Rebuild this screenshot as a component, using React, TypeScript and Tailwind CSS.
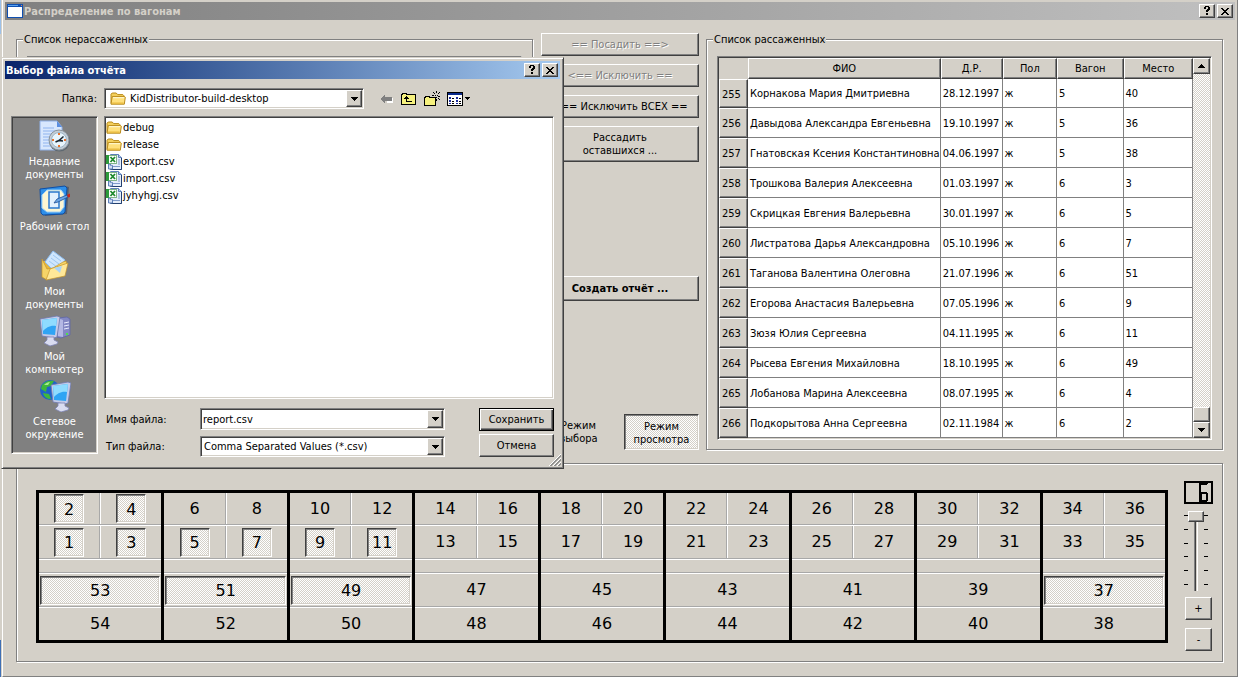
import React, { useState } from "react";
import clsx from "clsx";

const raised =
  "border border-t-white border-l-white border-r-[#404040] border-b-[#404040] bg-[#d4d0c8] shadow-[inset_-1px_-1px_0_#808080]";
const sunken =
  "border border-t-[#808080] border-l-[#808080] border-r-white border-b-white p-px shadow-[inset_1px_1px_0_#404040,inset_-1px_-1px_0_#d4d0c8]";
const pressed =
  "border border-t-[#404040] border-l-[#404040] border-r-white border-b-white shadow-[inset_1px_1px_0_#808080,inset_-1px_-1px_0_#d4d0c8] bg-[repeating-conic-gradient(#fff_0_25%,#d4d0c8_0_50%)] bg-[length:2px_2px]";
const etched =
  "border border-[#808080] shadow-[inset_1px_1px_0_#fff,1px_1px_0_#fff]";

const passengers = [
  { id: 255, name: "Корнакова Мария Дмитриевна", born: "28.12.1997", car: 5, seat: 40 },
  { id: 256, name: "Давыдова Александра Евгеньевна", born: "19.10.1997", car: 5, seat: 36 },
  { id: 257, name: "Гнатовская Ксения Константиновна", born: "04.06.1997", car: 5, seat: 38 },
  { id: 258, name: "Трошкова Валерия Алексеевна", born: "01.03.1997", car: 6, seat: 3 },
  { id: 259, name: "Скрицкая Евгения Валерьевна", born: "30.01.1997", car: 6, seat: 5 },
  { id: 260, name: "Листратова Дарья Александровна", born: "05.10.1996", car: 6, seat: 7 },
  { id: 261, name: "Таганова Валентина Олеговна", born: "21.07.1996", car: 6, seat: 51 },
  { id: 262, name: "Егорова Анастасия Валерьевна", born: "07.05.1996", car: 6, seat: 9 },
  { id: 263, name: "Зюзя Юлия Сергеевна", born: "04.11.1995", car: 6, seat: 11 },
  { id: 264, name: "Рысева Евгения Михайловна", born: "18.10.1995", car: 6, seat: 49 },
  { id: 265, name: "Лобанова Марина Алексеевна", born: "08.07.1995", car: 6, seat: 4 },
  { id: 266, name: "Подкорытова Анна Сергеевна", born: "02.11.1984", car: 6, seat: 2 },
];

const taken = [1, 2, 3, 4, 5, 7, 9, 11, 37, 49, 51, 53];
const compartments = [0, 1, 2, 3, 4, 5, 6, 7, 8];

const CaptionButtons: React.FC = () => (
  <div className="flex gap-[2px]">
    <button aria-label="Справка" className={clsx(raised, "flex h-[14px] w-4 items-center justify-center")}>
      <svg width="8" height="10" viewBox="0 0 8 10" shapeRendering="crispEdges">
        <path d="M1 1h1v-1h4v1h1v3h-1v1h-1v1h-2v-2h1v-1h1v-2h-2v2h-2zM3 7h2v2h-2z" />
      </svg>
    </button>
    <button aria-label="Закрыть" className={clsx(raised, "flex h-[14px] w-4 items-center justify-center")}>
      <svg width="8" height="7" viewBox="0 0 8 7" shapeRendering="crispEdges">
        <path d="M0 0h2v1h1v1h2v-1h1v-1h2v1h-1v1h-1v1h-1v1h1v1h1v1h1v1h-2v-1h-1v-1h-2v1h-1v1h-2v-1h1v-1h1v-1h1v-1h-1v-1h-1v-1h-1z" />
      </svg>
    </button>
  </div>
);

const DownArrow: React.FC<{ up?: boolean }> = ({ up }) => (
  <svg width="7" height="4" viewBox="0 0 7 4" shapeRendering="crispEdges" aria-hidden="true">
    <path d={up ? "M3 0h1v1h1v1h1v1h1v1h-7v-1h1v-1h1v-1h1z" : "M0 0h7v1h-1v1h-1v1h-1v1h-1v-1h-1v-1h-1v-1h-1z"} />
  </svg>
);

const ComboArrow: React.FC = () => (
  <span className={clsx(raised, "pointer-events-none flex w-4 shrink-0 items-center justify-center")}>
    <DownArrow />
  </span>
);

const FolderIcon: React.FC = () => (
  <svg width="16" height="16" viewBox="0 0 16 16" aria-hidden="true">
    <path d="M1 12.5V3.2L2.2 2h4l1.5 1.6h5.1l1 1V6" fill="#f3cf5b" stroke="#b98a1b" />
    <path d="M1 13.2 2.2 5.6h12.5l.6.7-1 6.9z" fill="#ffe07c" stroke="#b98a1b" />
    <path d="M3 6.7h11" stroke="#fffbdc" />
    <path d="M2.2 11.6h11.4l-.2 1.1H2z" fill="#e9b93c" />
  </svg>
);

const CsvIcon: React.FC = () => (
  <svg width="16" height="16" viewBox="0 0 16 16" aria-hidden="true">
    <path d="M4.5.5h8l3 3v12h-11z" fill="#e4edfb" stroke="#5c7fb8" />
    <path d="M12.5.5v3h3" fill="#b9cdee" stroke="#5c7fb8" />
    <path d="M12 6h2M12 8h2M12 10h2M7 12.5h7" stroke="#7f9bcb" />
    <path d="M15.5 4v11.5h-11" fill="none" stroke="#23406f" />
    <rect x="2.5" y="1.5" width="8" height="8" fill="#fff" stroke="#7fb487" />
    <path d="M4.500 3l4.500 5M9 3 4.500 8" stroke="#1f8a2f" strokeWidth="1.800" />
    <path d="M0 1h3v9H0z" fill="#2c9a3b" />
    <path d="M2.5 15h4v-3.500c-1.500 0-2.500-.5-4-1.500z" fill="#cfdcf2" stroke="#5c7fb8" />
  </svg>
);

const RecentIcon: React.FC = () => (
  <svg width="32" height="32" viewBox="0 0 32 32" aria-hidden="true">
    <path d="M1 1h17l5 6v23H1z" fill="#d8e7fd" stroke="#8fb0e6" />
    <path d="M18 1v6h5z" fill="#5a8ee0" />
    <path d="M4 8h11M4 11h14M4 14h10M4 17h7M4 20h6M4 23h6M4 26h8" stroke="#8fb3ee" />
    <circle cx="20.5" cy="21" r="10.5" fill="#5e6870" />
    <circle cx="20" cy="20" r="10" fill="#c3cdd6" stroke="#8a949c" />
    <circle cx="20" cy="20" r="7.5" fill="#e8f5fd" stroke="#9eb6c8" />
    <path d="M20 13v2M20 25v2M13 20h2M25 20h2" stroke="#e8702a" strokeWidth="2" />
    <path d="M16.5 22 20 20.5l4.5-4M20 20.500l4 .5" fill="none" stroke="#16232e" strokeWidth="1.500" />
  </svg>
);

const DesktopIcon: React.FC = () => (
  <svg width="32" height="32" viewBox="0 0 32 32" aria-hidden="true">
    <path d="M3 5 26 1l4 1-2 27-22 2z" fill="#3f4a5c" opacity=".6" />
    <path d="M1 4 26 1l2 2-2 24-2 2-20 1-2-2z" fill="#2f8fe8" stroke="#0e4fa6" />
    <path d="M8 5h14l3 4v13l-4 5H8l-5-4V10z" fill="#fdf6d2" stroke="#9fd0f6" />
    <path d="M10 7h10v16H10z" fill="#e3f1fe" stroke="#2a78cf" strokeWidth="1.500" />
    <path d="M15 18l3-4 10-4 1 2-10 5z" fill="#6ba6e6" stroke="#1f4f94" strokeWidth=".8" />
    <path d="M28 10l3-1.500v3.500l-2 .5z" fill="#c8261a" />
  </svg>
);

const DocumentsIcon: React.FC = () => (
  <svg width="32" height="32" viewBox="0 0 32 32" aria-hidden="true">
    <path d="M3 11h6l3 4v14l-8-2z" fill="#e6b63d" />
    <path d="M14 1 26 10 17 23 6 12z" fill="#cfe6fd" stroke="#8cbdf0" />
    <path d="M14 5l8 6M12 8l8 6M10 11l8 6" stroke="#9cc6f2" />
    <path d="M3 9v18l5 3 4-10 16-6-1-3-3 1-10 6-6 1z" fill="#f6d468" stroke="#c6952a" strokeWidth=".7" />
    <path d="M7 30 11 19l6-2 12-4-3 13z" fill="#ffe898" stroke="#c6952a" strokeWidth=".7" />
    <path d="M15 18l8-2-2 7z" fill="#a9d3f8" />
  </svg>
);

const Monitor: React.FC = () => (
  <g>
    <path d="M1 4 18 1l3 1-3 20-3 1L3 21z" fill="#c4cbe8" stroke="#6d78ad" strokeWidth=".8" />
    <path d="M3 5 18 3l-2 17L4 19z" fill="#2fa4f4" />
    <path d="M3 5 18 3l-1 8C11 10 7 13 4 16z" fill="#8fdcff" />
    <path d="M8 22h7v3l4 2-1 2-7 2-6-3 3-3z" fill="#d9dcf0" stroke="#7d84b4" strokeWidth=".8" />
  </g>
);

const ComputerIcon: React.FC = () => (
  <svg width="32" height="32" viewBox="0 0 32 32" aria-hidden="true">
    <path d="M19 3l9-1 3 2v16l-9 3-4-1z" fill="#8388c4" stroke="#6067a4" strokeWidth=".8" />
    <path d="M19 3l5 2v17l-5-1z" fill="#b4b8e4" />
    <path d="M25 8l5-1M25 11l5-1M25 14l5-1" stroke="#e9ebff" />
    <path d="M27 19h2" stroke="#4de04b" strokeWidth="2" />
    <Monitor />
  </svg>
);

const NetworkIcon: React.FC = () => (
  <svg width="32" height="32" viewBox="0 0 32 32" aria-hidden="true">
    <circle cx="11" cy="10" r="10" fill="#1f62c8" />
    <path d="M3 5c3-4 8-5 12-4l-3 5-4 1-1 5-5-3zM4 13l6 1 2 5c-4 0-7-2-8-6z" fill="#3fb73c" />
    <path d="M5 5c2-2 4-3 6-3l-2 3z" fill="#a8ec8f" />
    <g transform="translate(11 1)">
      <Monitor />
    </g>
  </svg>
);

const places = [
  { label: "Недавние документы", icon: <RecentIcon /> },
  { label: "Рабочий стол", icon: <DesktopIcon /> },
  { label: "Мои документы", icon: <DocumentsIcon /> },
  { label: "Мой компьютер", icon: <ComputerIcon /> },
  { label: "Сетевое окружение", icon: <NetworkIcon /> },
];

const files = [
  { name: "debug", folder: true },
  { name: "release", folder: true },
  { name: "export.csv", folder: false },
  { name: "import.csv", folder: false },
  { name: "jyhyhgj.csv", folder: false },
];

const ToolbarIcons: React.FC = () => (
  <div className="ml-4 flex items-center">
    <button aria-label="Назад" className="flex w-[21px] justify-start" disabled>
      <svg width="14" height="12" viewBox="0 0 14 12" shapeRendering="crispEdges">
        <path d="M6 2v3h7v5H7v2z" fill="#fff" />
        <path d="M0 6l5-5v3h7v4H5v3z" fill="#808080" />
      </svg>
    </button>
    <button aria-label="Вверх" className="flex w-[23px] justify-start">
      <svg width="16" height="14" viewBox="0 0 16 14" shapeRendering="crispEdges">
        <path d="M.5 2.5h1v-1h4v1h9v10h-14z" fill="#f6f17e" stroke="#000" />
        <path d="M5 4h1v1h1v1h1v1h-2v2h5v1H5V7H3V6h1V5h1z" />
      </svg>
    </button>
    <button aria-label="Новая папка" className="flex w-[23px] justify-start">
      <svg width="17" height="16" viewBox="0 0 17 16" shapeRendering="crispEdges">
        <path d="M.5 6.5h1v-1h4v1h6v8H.5z" fill="#f6f17e" stroke="#000" />
        <path d="M12 0h1v2h-1zM12 8h1v2h-1zM8 4h2v1H8zM14 5h2v1h-2zM9 1h1v1H9zM10 2h1v1h-1zM15 1h1v1h-1zM14 2h1v1h-1zM11 4h1v1h-1zM13 4h1v1h-1zM14 7h1v1h-1zM15 8h1v1h-1zM12 6h1v1h-1z" />
      </svg>
    </button>
    <button aria-label="Вид" className="flex items-center gap-[2px]">
      <svg width="16" height="14" viewBox="0 0 16 14" shapeRendering="crispEdges">
        <path d="M.5.5h15v13H.5z" fill="#fff" stroke="#000" />
        <path d="M1 1h14v2H1z" fill="#0a2a8c" />
        <path d="M2 5h2v2H2zM9 5h2v2H9zM2 8h2v2H2zM9 8h2v2H9zM2 11h2v1H2zM9 11h2v1H9z" fill="#1c2c9c" />
        <path d="M5 6h2v1H5zM12 6h2v1h-2zM5 9h2v1H5zM12 9h2v1h-2zM5 11h2v1H5zM12 11h2v1h-2z" />
      </svg>
      <svg width="5" height="3" viewBox="0 0 5 3" shapeRendering="crispEdges">
        <path d="M0 0h5v1H4v1H3v1H2V2H1V1H0z" />
      </svg>
    </button>
  </div>
);

const SaveDialog: React.FC = () => {
  const [fileName, setFileName] = useState<string>("report.csv");

  return (
    <div
      role="dialog"
      aria-label="Выбор файла отчёта"
      className="absolute top-[57px] left-px w-[563px] border border-t-[#d4d0c8] border-r-[#404040] border-b-[#404040] border-l-[#d4d0c8] bg-[#d4d0c8] p-[3px] shadow-[inset_1px_1px_0_#fff,inset_-1px_-1px_0_#808080]"
    >
      <div className="flex h-[18px] items-center justify-between bg-linear-to-r from-[#0a246a] to-[#a6caf0] pr-[2px] pl-px">
        <h2 className="font-bold text-white">Выбор файла отчёта</h2>
        <CaptionButtons />
      </div>

      <div className="mt-[9px] flex items-center">
        <label htmlFor="folder" className="w-[92px] text-right">
          Папка:
        </label>
        <div className={clsx(sunken, "ml-[7px] flex h-[21px] w-[260px] bg-white")}>
          <span className="ml-1 flex items-center">
            <FolderIcon />
          </span>
          <select id="folder" className="min-w-0 flex-1 appearance-none bg-white pl-1">
            <option>KidDistributor-build-desktop</option>
          </select>
          <ComboArrow />
        </div>
        <ToolbarIcons />
      </div>

      <div className="mt-[7px] flex pr-[6px] pb-2 pl-[6px]">
        <nav className={clsx(sunken, "h-[338px] w-[87px] shrink-0 self-start bg-[#808080] pt-[3px]")}>
          {places.map((place) => (
            <button
              key={place.label}
              className="flex h-[65px] w-full flex-col items-center gap-[3px] text-center text-white"
            >
              {place.icon}
              <span className="max-w-[76px]">{place.label}</span>
            </button>
          ))}
        </nav>

        <div className="ml-[6px] flex-1">
          <ul className={clsx(sunken, "h-[283px] bg-white pt-[2px]")}>
            {files.map((file) => (
              <li key={file.name} className="flex h-[17px] items-center gap-px">
                {file.folder ? <FolderIcon /> : <CsvIcon />}
                <span>{file.name}</span>
              </li>
            ))}
          </ul>
          <div className="mt-[9px] flex justify-between">
            <div className="flex flex-col gap-[6px] pl-[2px]">
              <div className="flex items-center">
                <label htmlFor="file-name" className="w-[94px]">
                  Имя файла:
                </label>
                <div className={clsx(sunken, "flex h-[22px] w-[245px] bg-white")}>
                  <input
                    id="file-name"
                    value={fileName}
                    onChange={(e) => setFileName(e.target.value)}
                    className="min-w-0 flex-1 pl-px outline-none"
                  />
                  <ComboArrow />
                </div>
              </div>
              <div className="flex items-center">
                <label htmlFor="file-type" className="w-[94px]">
                  Тип файла:
                </label>
                <div className={clsx(sunken, "flex h-[21px] w-[245px] bg-white")}>
                  <select id="file-type" className="min-w-0 flex-1 appearance-none bg-white pl-[2px]">
                    <option>Comma Separated Values (*.csv)</option>
                  </select>
                  <ComboArrow />
                </div>
              </div>
            </div>
            <div className="flex w-[75px] flex-col gap-[3px]">
              <button className="h-[23px] border border-black bg-[#d4d0c8] shadow-[inset_1px_1px_0_#fff,inset_-1px_-1px_0_#404040,inset_-2px_-2px_0_#808080]">
                Сохранить
              </button>
              <button className={clsx(raised, "h-[23px]")}>Отмена</button>
            </div>
          </div>
        </div>
      </div>

      <svg className="absolute right-[2px] bottom-[2px]" width="12" height="12" viewBox="0 0 12 12" aria-hidden="true">
        <path d="M0 12 12 0M4 12l8-8M8 12l4-4" stroke="#fff" />
        <path d="M1 12 12 1M2 12 12 2M5 12l7-7M6 12l6-6M9 12l3-3M10 12l2-2" stroke="#808080" strokeWidth=".8" />
      </svg>
    </div>
  );
};

const PassengerTable: React.FC = () => {
  const th = "h-[21px] border-t border-l border-r border-b border-t-white border-l-white border-r-[#404040] border-b-[#404040] shadow-[inset_-1px_-1px_0_#808080] font-normal";
  const td = "border-r border-b border-[#808080] pt-px pl-[2px]";

  return (
    <div className={clsx(sunken, "flex bg-[#d4d0c8]")}>
      <table className="min-w-0 flex-1 table-fixed border-separate border-spacing-0 bg-white">
        <colgroup>
          <col className="w-[29px]" />
          <col />
          <col className="w-[62px]" />
          <col className="w-[55px]" />
          <col className="w-[67px]" />
          <col className="w-[70px]" />
        </colgroup>
        <thead>
          <tr className="bg-[#d4d0c8]">
            <td className="p-0" />
            <th className={th}>ФИО</th>
            <th className={th}>Д.Р.</th>
            <th className={th}>Пол</th>
            <th className={th}>Вагон</th>
            <th className={th}>Место</th>
          </tr>
        </thead>
        <tbody>
          {passengers.map((p) => (
            <tr key={p.id} className="h-[30px] whitespace-nowrap first:h-[29px]">
              <th
                scope="row"
                className="border border-t-white border-r-[#404040] border-b-[#404040] border-l-white bg-[#d4d0c8] pt-px pr-1 font-normal shadow-[inset_-1px_-1px_0_#808080]"
              >
                {p.id}
              </th>
              <td className={td}>{p.name}</td>
              <td className={td}>{p.born}</td>
              <td className={td}>ж</td>
              <td className={td}>{p.car}</td>
              <td className={td}>{p.seat}</td>
            </tr>
          ))}
        </tbody>
      </table>
      <div className="flex w-[17px] flex-col bg-[repeating-conic-gradient(#fff_0_25%,#d4d0c8_0_50%)] bg-[length:2px_2px]">
        <button aria-label="Вверх" className={clsx(raised, "flex h-4 items-center justify-center")}>
          <DownArrow up />
        </button>
        <div className={clsx(raised, "mt-auto h-[15px]")} />
        <button aria-label="Вниз" className={clsx(raised, "flex h-4 items-center justify-center")}>
          <DownArrow />
        </button>
      </div>
    </div>
  );
};

const Seat: React.FC<{ number: number; wide?: boolean }> = ({ number, wide }) => (
  <button
    aria-pressed={taken.includes(number)}
    className={clsx(
      "h-[29px] font-['DejaVu_Sans',sans-serif] text-[16px] leading-5",
      wide ? "w-full" : "w-[30px]",
      taken.includes(number) && pressed,
      taken.includes(number) && "pt-[2px]"
    )}
  >
    {number}
  </button>
);

const SeatPair: React.FC<{ left: number; right: number }> = ({ left, right }) => (
  <div className="flex border-b border-white">
    <div className="flex flex-1 border-b border-[#a8a8a8]">
      <div className="flex flex-1 items-center justify-center border-r border-[#a8a8a8]">
        <Seat number={left} />
      </div>
      <div className="flex flex-1 items-center justify-center border-l border-white">
        <Seat number={right} />
      </div>
    </div>
  </div>
);

const Compartment: React.FC<{ index: number }> = ({ index }) => {
  const first = index * 4 + 1;
  const side = 53 - index * 2;

  return (
    <div className="grid flex-1 grid-rows-[33px_34px_14px_34px_32px] border-l-3 border-black first:border-l-0">
      <SeatPair left={first + 1} right={first + 3} />
      <SeatPair left={first} right={first + 2} />
      <div className="border-b border-white">
        <div className="h-full border-b border-[#a8a8a8]" />
      </div>
      <div className="border-b border-white">
        <div className="flex h-full items-center border-b border-[#a8a8a8] px-px">
          <Seat number={side} wide />
        </div>
      </div>
      <div className="flex items-center">
        <Seat number={side + 1} wide />
      </div>
    </div>
  );
};

// The car number on a small seven-segment display
const CarDisplay: React.FC = () => (
  <svg width="29" height="23" viewBox="0 0 29 23" role="img" aria-label="Вагон 6" shapeRendering="crispEdges">
    <path d="M1 1h27v21H1z" fill="none" stroke="#000" strokeWidth="2" />
    <path d="M15 2h2v19h-2zM17 2h7v1h-1v1h-6zM17 11h6v2h-6zM22 12h2v7h-2zM17 19h7v1h-1v1h-6zM17 13h1v6h-1z" />
  </svg>
);

const Ticks: React.FC = () => (
  <div className="flex h-[70px] w-1 flex-col justify-between" aria-hidden="true">
    {[0, 1, 2, 3, 4, 5].map((tick) => (
      <span key={tick} className="h-px bg-black" />
    ))}
  </div>
);

const CarSelector: React.FC = () => {
  const [car, setCar] = useState<number>(0);

  return (
    <div className="flex w-[29px] shrink-0 flex-col items-center">
      <CarDisplay />
      <div className="mt-[6px] flex h-20 w-full items-start">
        <div className="pt-[5px]">
          <Ticks />
        </div>
        <input
          type="range"
          aria-label="Вагон"
          min={0}
          max={5}
          value={car}
          onChange={(e) => setCar(Number(e.target.value))}
          className="mx-px h-20 w-4 appearance-none bg-transparent [writing-mode:vertical-lr] [&::-webkit-slider-runnable-track]:h-full [&::-webkit-slider-runnable-track]:w-4 [&::-webkit-slider-runnable-track]:bg-[linear-gradient(to_right,transparent_6px,#808080_6px,#808080_7px,#404040_7px,#404040_8px,#d4d0c8_8px,#d4d0c8_9px,#fff_9px,#fff_10px,transparent_10px)] [&::-webkit-slider-thumb]:h-[11px] [&::-webkit-slider-thumb]:w-4 [&::-webkit-slider-thumb]:appearance-none [&::-webkit-slider-thumb]:border [&::-webkit-slider-thumb]:border-t-white [&::-webkit-slider-thumb]:border-r-[#404040] [&::-webkit-slider-thumb]:border-b-[#404040] [&::-webkit-slider-thumb]:border-l-white [&::-webkit-slider-thumb]:bg-[#d4d0c8] [&::-webkit-slider-thumb]:shadow-[inset_-1px_-1px_0_#808080]"
        />
        <div className="pt-[5px]">
          <Ticks />
        </div>
      </div>
      <button className={clsx(raised, "mt-[7px] h-[23px] w-[27px]")}>+</button>
      <button className={clsx(raised, "mt-2 h-[23px] w-[27px]")}>-</button>
    </div>
  );
};

const App: React.FC = () => {
  return (
    <div className="relative flex min-h-screen overflow-hidden bg-[#d4d0c8] font-['DejaVu_Sans_Condensed','DejaVu_Sans',sans-serif] text-[11px] leading-[13px] text-black">
      <div className="flex w-px flex-col">
        <span className="h-[34px] bg-[#9cc0e8]" />
        <span className="flex-1 bg-[#d4d0c8]" />
        <span className="h-[37px] bg-[#3f6fb5]" />
      </div>
      <div className="min-w-0 flex-1 pl-px">
        <div className="flex min-h-full flex-col border-r border-b border-l border-r-[#808080] border-b-[#808080] border-l-white pt-[2px]">
          <div className="mx-[2px] flex h-[18px] items-center justify-between bg-linear-to-r from-[#808080] to-[#c0c0c0] pr-[2px] pl-[2px]">
            <div className="flex items-center gap-px">
              <svg width="16" height="14" viewBox="0 0 16 14" shapeRendering="crispEdges" aria-hidden="true">
                <path d="M0 0h16v14H0z" fill="#0f4fb0" />
                <path d="M1 3h14v10H1z" fill="#fff" />
                <path d="M1 1h10v1H1z" fill="#5aa2f0" />
                <path d="M14 1h1v1h-1z" fill="#f08040" />
              </svg>
              <h1 className="font-bold text-[#d4d0c8]">Распределение по вагонам</h1>
            </div>
            <CaptionButtons />
          </div>

          <main className="pt-[13px] pr-[14px] pb-[14px] pl-[13px]">
            <div className="flex">
              <fieldset className={clsx(etched, "min-w-0 flex-1 px-[10px] pt-[10px]")}>
                <legend className="-ml-1 bg-[#d4d0c8] px-px">Список нерассаженных</legend>
                <div className={clsx(sunken, "h-full")} />
              </fieldset>

              <div className="mr-[7px] ml-2 flex w-[158px] flex-col gap-2">
                <button
                  disabled
                  className={clsx(raised, "h-[23px] text-[#808080] [text-shadow:1px_1px_0_#fff]")}
                >
                  == Посадить ==&gt;
                </button>
                <button
                  disabled
                  className={clsx(raised, "h-[23px] text-[#808080] [text-shadow:1px_1px_0_#fff]")}
                >
                  &lt;== Исключить ==
                </button>
                <button className={clsx(raised, "h-[23px]")}>&lt;== Исключить ВСЕХ ==</button>
                <button className={clsx(raised, "h-9 px-8")}>Рассадить оставшихся ...</button>
                <button className={clsx(raised, "mt-[106px] h-[25px] font-bold")}>Создать отчёт ...</button>
                <div className="mt-auto grid grid-cols-2 gap-2">
                  <button className="h-9">Режим выбора</button>
                  <button aria-pressed="true" className={clsx(pressed, "h-9 pt-px")}>
                    Режим просмотра
                  </button>
                </div>
              </div>

              <fieldset className={clsx(etched, "min-w-0 flex-1 px-[10px] pt-[10px] pb-[9px]")}>
                <legend className="-ml-1 bg-[#d4d0c8] px-px">Список рассаженных</legend>
                <PassengerTable />
              </fieldset>
            </div>

            <section className={clsx(etched, "mt-[13px] flex gap-4 pt-[17px] pr-[9px] pb-[10px] pl-[19px]")}>
              <div className="mt-[9px] flex flex-1 self-start border-3 border-black">
                {compartments.map((index) => (
                  <Compartment key={index} index={index} />
                ))}
              </div>
              <CarSelector />
            </section>
          </main>
        </div>
      </div>

      <SaveDialog />
    </div>
  );
};

export default App;
